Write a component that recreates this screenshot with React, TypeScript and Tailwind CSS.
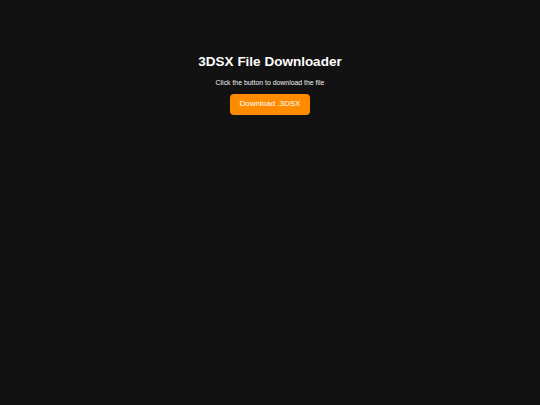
import React from 'react';

const App: React.FC = () => {
  const handleDownload = () => {
    // no file in the sandbox, just a placeholder
  };

  return (
    <div
      className="min-h-screen w-full bg-[#121212] flex flex-col items-center pt-[54px] text-white"
      style={{ fontFamily: '"Liberation Sans", Arial, sans-serif' }}
    >
      <h1 className="text-[13.5px] leading-[16px] font-bold">3DSX File Downloader</h1>
      <p className="mt-[9px] text-[6.9px] leading-[8px] text-[#f0f0f0]">
        Click the button to download the file
      </p>
      <button
        onClick={handleDownload}
        className="mt-[7px] h-[21px] w-[80px] flex items-center justify-center pb-[3px] text-[8px] leading-[9px] bg-[#ff8c00] text-white rounded-[4px]"
      >
        Download .3DSX
      </button>
    </div>
  );
};

export default App;
